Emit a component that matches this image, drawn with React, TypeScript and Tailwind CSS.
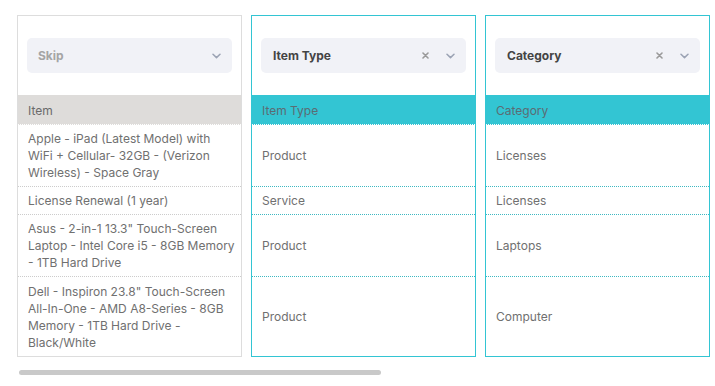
import React from "react";

type Col = {
  title: string;
  header: string;
  active: boolean;
  clear: boolean;
  cells: string[][];
};

const heights = ["h-[62px]", "h-[28px]", "h-[62px]", "h-[79px]"];

const cols: Col[] = [
  {
    title: "Skip",
    header: "Item",
    active: false,
    clear: false,
    cells: [
      ["Apple - iPad (Latest Model) with", "WiFi + Cellular- 32GB - (Verizon", "Wireless) - Space Gray"],
      ["License Renewal (1 year)"],
      ["Asus - 2-in-1 13.3\" Touch-Screen", "Laptop - Intel Core i5 - 8GB Memory", "- 1TB Hard Drive"],
      ["Dell - Inspiron 23.8\" Touch-Screen", "All-In-One - AMD A8-Series - 8GB", "Memory - 1TB Hard Drive -", "Black/White"],
    ],
  },
  {
    title: "Item Type",
    header: "Item Type",
    active: true,
    clear: true,
    cells: [["Product"], ["Service"], ["Product"], ["Product"]],
  },
  {
    title: "Category",
    header: "Category",
    active: true,
    clear: true,
    cells: [["Licenses"], ["Licenses"], ["Laptops"], ["Computer"]],
  },
];

function Chevron() {
  return (
    <svg width="9" height="6" viewBox="0 0 9 6" fill="none">
      <path d="M1 1.2L4.5 4.6L8 1.2" stroke="#9ba3b4" strokeWidth="1.5" strokeLinecap="round" strokeLinejoin="round" />
    </svg>
  );
}

function Cross() {
  return (
    <svg width="7" height="7" viewBox="0 0 7 7" fill="none">
      <path d="M1 1L6 6M6 1L1 6" stroke="#9a9a9a" strokeWidth="1.6" strokeLinecap="round" />
    </svg>
  );
}

function Column({ col }: { col: Col }) {
  const last = col.cells.length - 1;
  return (
    <div
      className={
        "w-[225px] shrink-0 border bg-white flex flex-col " +
        (col.active ? "border-[#33c5d3]" : "border-[#dddddd]")
      }
    >
      <div className="px-[9px] py-[22px]">
        <div className="h-[35px] rounded-[5px] bg-[#f1f2f7] flex items-center pl-[11px] pr-[11px]">
          <span
            className={
              "flex-1 text-[12px] font-bold " + (col.active ? "text-[#444444] pl-[1px]" : "text-[#a5a5a5]")
            }
          >
            {col.title}
          </span>
          {col.clear && (
            <span className="w-[10px] flex justify-center mr-[15px]">
              <Cross />
            </span>
          )}
          <span className="w-[10px] flex justify-center">
            <Chevron />
          </span>
        </div>
      </div>
      <div
        className={
          "h-[30px] flex items-center pt-[3px] px-[10px] border-b border-dotted text-[12px] " +
          (col.active
            ? "bg-[#33c5d3] text-[#5b6c73] border-b-[#ffffff]"
            : "bg-[#dedcda] text-[#6a6a6a] border-b-[#ffffff]")
        }
      >
        {col.header}
      </div>
      {col.cells.map((lines, i) => (
        <div
          key={i}
          className={
            heights[i] +
            " flex flex-col justify-center px-[10px] text-[12px] leading-[17px] text-[#707070] " +
            (i < last
              ? "border-b border-dotted " + (col.active ? "border-b-[#3fb8c2]" : "border-b-[#cccccc]")
              : "")
          }
        >
          {lines.map((l, j) => (
            <div key={j} className="whitespace-nowrap">
              {l}
            </div>
          ))}
        </div>
      ))}
    </div>
  );
}

export default function App() {
  return (
    <div
      className="w-[715px] h-[386px] bg-white overflow-hidden"
      style={{ fontFamily: "Inter, 'Noto Sans', sans-serif" }}
    >
      <div className="flex gap-[9px] pl-[17px] pt-[15px]">
        {cols.map((c, i) => (
          <Column key={i} col={c} />
        ))}
      </div>
      <div className="ml-[19px] mt-[13px] w-[362px] h-[5px] rounded-full bg-[#c9c9c9]" />
    </div>
  );
}
